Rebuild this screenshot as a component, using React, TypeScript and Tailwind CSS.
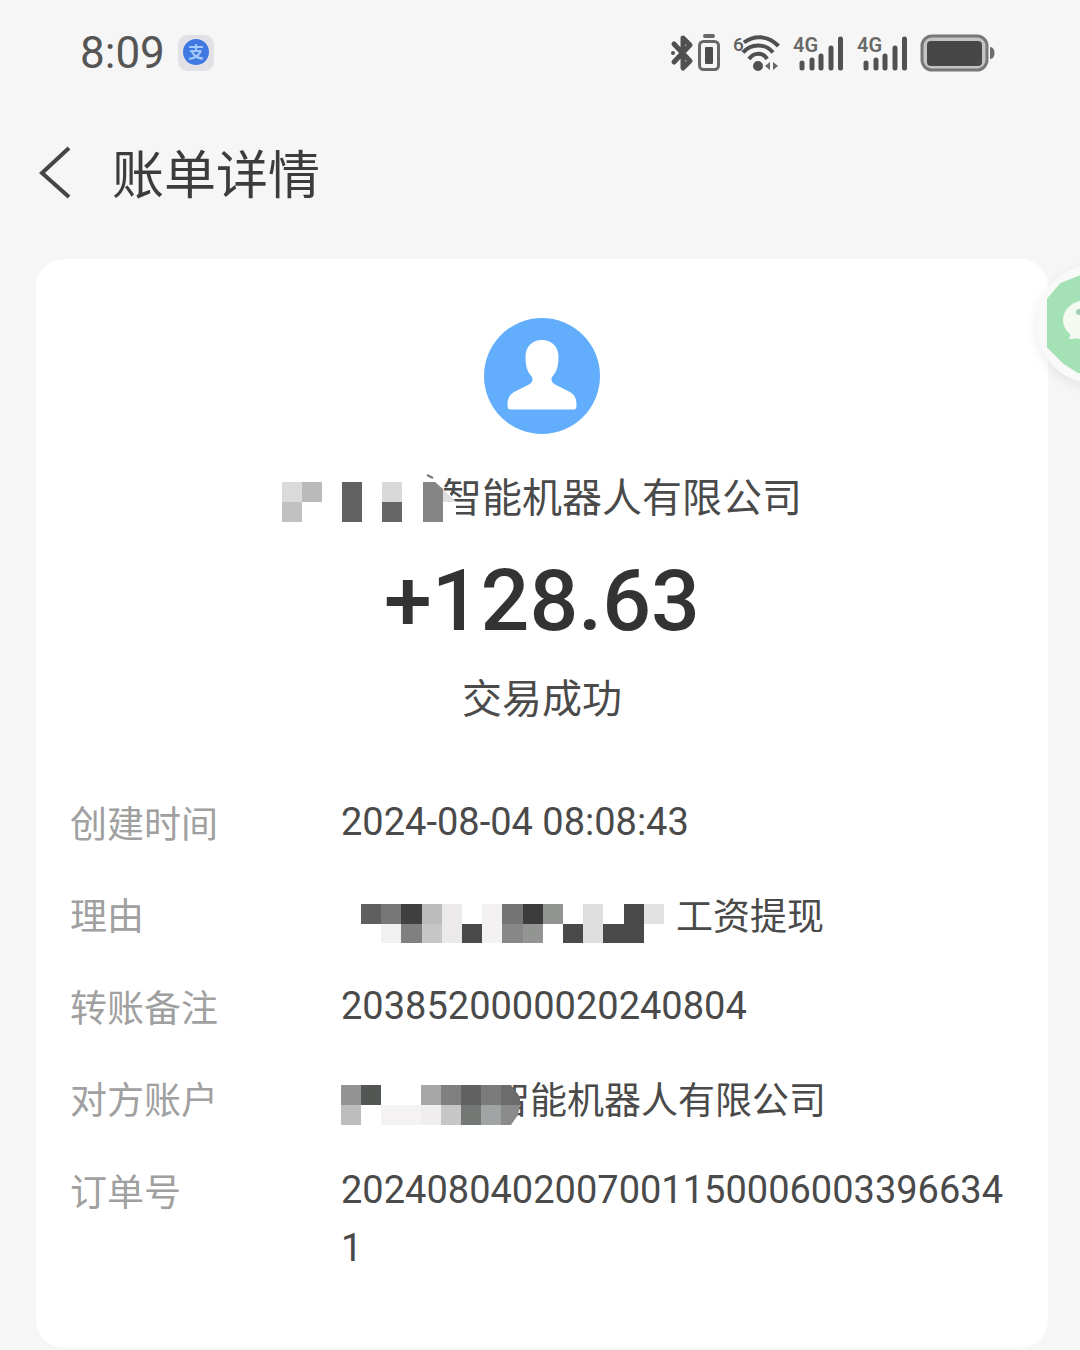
import type { ReactNode } from "react";

const CELL = 20;

// One entry per mosaic block: column, row, fill.
type Block = [number, number, string];

const NAME_BLOCKS: Block[] = [
	[0, 0, "#dadada"],
	[1, 0, "#bababa"],
	[0, 1, "#c1c1c1"],
	[3, 0, "#626262"],
	[3, 1, "#626262"],
	[5, 0, "#d9d9d9"],
	[5, 1, "#666666"],
];

const REASON_BLOCKS: Block[] = [
	[0, 0, "#5f5f5f"],
	[1, 0, "#777777"],
	[2, 0, "#404040"],
	[3, 0, "#bcbcbc"],
	[4, 0, "#ebe9ea"],
	[6, 0, "#f4f1f2"],
	[7, 0, "#747474"],
	[8, 0, "#3c3c3c"],
	[9, 0, "#929492"],
	[11, 0, "#dedede"],
	[13, 0, "#494949"],
	[14, 0, "#e2e2e2"],
	[1, 1, "#f1f1f1"],
	[2, 1, "#808080"],
	[3, 1, "#c6c6c6"],
	[4, 1, "#ebe9ea"],
	[5, 1, "#494949"],
	[6, 1, "#f4f1f2"],
	[7, 1, "#878787"],
	[8, 1, "#929592"],
	[10, 1, "#494949"],
	[11, 1, "#dedede"],
	[12, 1, "#494949"],
	[13, 1, "#494949"],
];

const ACCOUNT_BLOCKS: Block[] = [
	[0, 0, "#949494"],
	[1, 0, "#535753"],
	[4, 0, "#a6a6a6"],
	[5, 0, "#808080"],
	[6, 0, "#616161"],
	[7, 0, "#7a7a7a"],
	[0, 1, "#bdbdbd"],
	[2, 1, "#f5f2f4"],
	[3, 1, "#f5f2f4"],
	[4, 1, "#efedee"],
	[5, 1, "#c6c6c6"],
	[6, 1, "#747874"],
	[7, 1, "#a1a4a4"],
];

function Blocks({ blocks }: { blocks: Block[] }) {
	return (
		<g shapeRendering="crispEdges">
			{blocks.map(([col, row, fill]) => (
				<rect
					key={`${col}-${row}`}
					x={col * CELL}
					y={row * CELL}
					width={CELL}
					height={CELL}
					fill={fill}
				/>
			))}
		</g>
	);
}

function PayLogo() {
	return (
		<svg width="38" height="38" viewBox="0 0 38 38" aria-hidden="true">
			<rect x="1" y="1" width="36" height="36" rx="9" fill="#e2e1e6" />
			<circle cx="19" cy="18" r="13" fill="#3f78e0" />
			<text
				x="19"
				y="24"
				textAnchor="middle"
				fontSize="16"
				fontWeight="700"
				fill="#a5cbfa"
				className="font-['Noto_Sans_CJK_SC',sans-serif]"
			>
				支
			</text>
		</svg>
	);
}

function BluetoothIcon() {
	return (
		<svg width="24" height="38" viewBox="0 0 24 38" fill="none" aria-hidden="true">
			<path
				d="M4 10 20 27 13 34V4l7 7L4 28"
				stroke="#505050"
				strokeWidth="5"
				strokeLinejoin="round"
				strokeLinecap="round"
			/>
			<circle cx="3" cy="19" r="2" fill="#505050" />
		</svg>
	);
}

function DeviceBatteryIcon() {
	return (
		<svg width="22" height="38" viewBox="0 0 22 38" fill="none" aria-hidden="true">
			<path d="M7 2h8" stroke="#686868" strokeWidth="4" strokeLinecap="round" />
			<rect x="1.5" y="7.5" width="19" height="28" rx="4" stroke="#686868" strokeWidth="3" />
			<rect x="7" y="13" width="8" height="17" rx="1" fill="#4c4c4c" />
		</svg>
	);
}

function WifiIcon() {
	return (
		<svg width="48" height="38" viewBox="0 0 48 38" fill="none" aria-hidden="true">
			<text
				x="1"
				y="17"
				fontSize="19"
				fontWeight="500"
				fill="#606060"
				className="font-[Roboto,sans-serif]"
			>
				6
			</text>
			<g stroke="#505050" strokeWidth="4">
				<path d="M12 8.500C22 1 36 1 46.500 12" />
				<path d="M11 18.500C19 9 33 9 41 18.500" />
				<path d="M17 25C22 18 31 18 35 25" />
			</g>
			<circle cx="26" cy="32" r="5" fill="#505050" />
			<path d="m33 32 5-4v8zM46 32l-5-4v8z" fill="#666666" />
		</svg>
	);
}

function SignalIcon() {
	return (
		<svg width="52" height="38" viewBox="0 0 52 38" fill="none" aria-hidden="true">
			<text
				x="1"
				y="18"
				fontSize="20"
				fontWeight="600"
				fill="#6a6a6a"
				className="font-[Roboto,sans-serif]"
			>
				4G
			</text>
			<path
				d="M10 29v5M20 26v8M29 22v12M39 14v20M48.500 5v29"
				stroke="#515151"
				strokeWidth="5"
				strokeLinecap="round"
			/>
		</svg>
	);
}

function BatteryIcon() {
	return (
		<svg width="76" height="38" viewBox="0 0 76 38" fill="none" aria-hidden="true">
			<rect
				x="2"
				y="2"
				width="65"
				height="34"
				rx="10"
				fill="#c4c4c4"
				stroke="#777777"
				strokeWidth="3"
			/>
			<rect x="7" y="7" width="55" height="25" rx="4" fill="#474747" />
			<path d="M70 13c6 0 6 12 0 12z" fill="#6c6c6c" />
		</svg>
	);
}

function StatusBar() {
	return (
		<div className="flex h-[106px] items-center justify-between pr-[84px] pl-20">
			<div className="flex items-center gap-3">
				<span className="font-[Roboto,sans-serif] text-[44px] leading-[50px] text-[#555555]">
					8:09
				</span>
				<PayLogo />
			</div>
			<div className="flex items-center gap-3">
				<div className="flex items-center gap-1">
					<BluetoothIcon />
					<DeviceBatteryIcon />
				</div>
				<WifiIcon />
				<SignalIcon />
				<SignalIcon />
				<BatteryIcon />
			</div>
		</div>
	);
}

function Avatar() {
	return (
		<svg width="116" height="116" viewBox="0 0 116 116" aria-hidden="true">
			<circle cx="58" cy="58" r="58" fill="#62aefd" />
			<path
				d="M58 22c-10 0-16.500 7-16.500 16.500 0 11 2.500 16 6.500 20.500 1.500 4-.5 6-3 7.500L30 74c-5 3-6.500 7-6.500 13 0 3 .5 4.500 3 4.500h63c2.500 0 3-1.500 3-4.500 0-6-1.500-10-6.500-13l-15-7.500c-2.500-1.500-4.500-3.500-3-7.500 4-4.500 6.500-9.500 6.500-20.500C74.500 29 68 22 58 22Z"
				fill="#ffffff"
			/>
		</svg>
	);
}

function Field({ label, children }: { label: string; children: ReactNode }) {
	return (
		<div className="flex">
			<dt className="w-[271px] shrink-0 text-[#a0a0a0]">{label}</dt>
			<dd className="flex min-w-0 flex-1 items-center">{children}</dd>
		</div>
	);
}

function Digits({ children }: { children: ReactNode }) {
	return (
		<span className="font-[Roboto,sans-serif] text-[38px] break-all">{children}</span>
	);
}

export default function App() {
	return (
		<div className="relative min-h-screen overflow-hidden bg-[#f6f6f6] font-['Noto_Sans_CJK_SC',sans-serif] text-[#4a4a4a]">
			<StatusBar />

			<header className="flex h-[132px] items-center gap-10 pl-9">
				<button type="button" aria-label="返回">
					<svg width="36" height="56" viewBox="0 0 36 56" fill="none">
						<path d="M33 4 6 29l27 24" stroke="#454545" strokeWidth="4" />
					</svg>
				</button>
				<h1 className="text-[52px] leading-[72px] text-[#3c3c3c]">账单详情</h1>
			</header>

			<main className="mt-[21px] mr-8 mb-0.5 ml-9 rounded-[28px] bg-white px-[34px] pt-[59px] pb-[71px]">
				<section className="flex flex-col items-center">
					<Avatar />
					<div className="mt-[31px] flex items-center text-[40px] leading-[60px]">
						<svg
							className="relative z-10 -mr-6 shrink-0"
							width="184"
							height="60"
							viewBox="0 -17 184 60"
							aria-hidden="true"
						>
							<Blocks blocks={NAME_BLOCKS} />
							<path d="M160 9h6l8 12v22h-14z" fill="#ffffff" />
							<path d="M160 6l14 14h-14z" fill="#dedede" />
							<path d="M141 0h12l8 7v33h-20z" fill="#858585" />
							<path d="m145-7 6 3" stroke="#777777" strokeWidth="2" />
						</svg>
						<h2>智能机器人有限公司</h2>
					</div>
					<p className="mt-[26px] font-[Roboto,sans-serif] text-[86px] leading-[100px] font-medium text-[#333333]">
						+128.63
					</p>
					<p className="mt-[15px] text-[40px] leading-[60px]">交易成功</p>
				</section>

				<dl className="mt-[67px] flex flex-col gap-[34px] text-[37px] leading-[58px]">
					<Field label="创建时间">
						<Digits>2024-08-04 08:08:43</Digits>
					</Field>
					<Field label="理由">
						<svg
							className="mr-3 ml-5 shrink-0"
							width="303"
							height="58"
							viewBox="0 -19 300 58"
							preserveAspectRatio="none"
							aria-hidden="true"
						>
							<Blocks blocks={REASON_BLOCKS} />
						</svg>
						工资提现
					</Field>
					<Field label="转账备注">
						<Digits>2038520000020240804</Digits>
					</Field>
					<Field label="对方账户">
						<svg
							className="relative z-10 -mr-7 shrink-0"
							width="180"
							height="58"
							viewBox="0 -16 180 58"
							aria-hidden="true"
						>
							<path d="M146-14h24V0h-24zM146 38h33v6h-33z" fill="#ffffff" />
							<Blocks blocks={ACCOUNT_BLOCKS} />
							<path d="M160 0h10l9 12v8h-19z" fill="#6c6c6c" />
							<path d="M160 20h19l-2 10-7 10h-10z" fill="#8b8b8b" />
						</svg>
						智能机器人有限公司
					</Field>
					<Field label="订单号">
						<Digits>20240804020070011500060033966341</Digits>
					</Field>
				</dl>
			</main>

			{/* Floating chat bubble, parked half outside the right edge */}
			<button
				type="button"
				aria-label="微信"
				className="absolute top-[264px] -right-[76px] size-[120px] rounded-full bg-[#f9f9f9] p-[11px] shadow-[0_4px_12px_rgba(0,0,0,0.08)]"
			>
				<svg width="98" height="98" viewBox="0 0 98 98" aria-hidden="true">
					<path
						d="M34 1h30l20 9 11 13v50L80 90 66 97H31L17 88 1 72V24L14 9Z"
						fill="#a4e2b6"
						stroke="#a4e2b6"
						strokeWidth="2"
						strokeLinejoin="round"
					/>
					<ellipse cx="40" cy="45" rx="24" ry="20" fill="#f4faf1" />
					<path d="m24 58-2 6 12-1z" fill="#f4faf1" />
					<circle cx="32" cy="37" r="3" fill="#a4ceb0" />
					<circle cx="48" cy="37" r="3" fill="#a4ceb0" />
				</svg>
			</button>
		</div>
	);
}
